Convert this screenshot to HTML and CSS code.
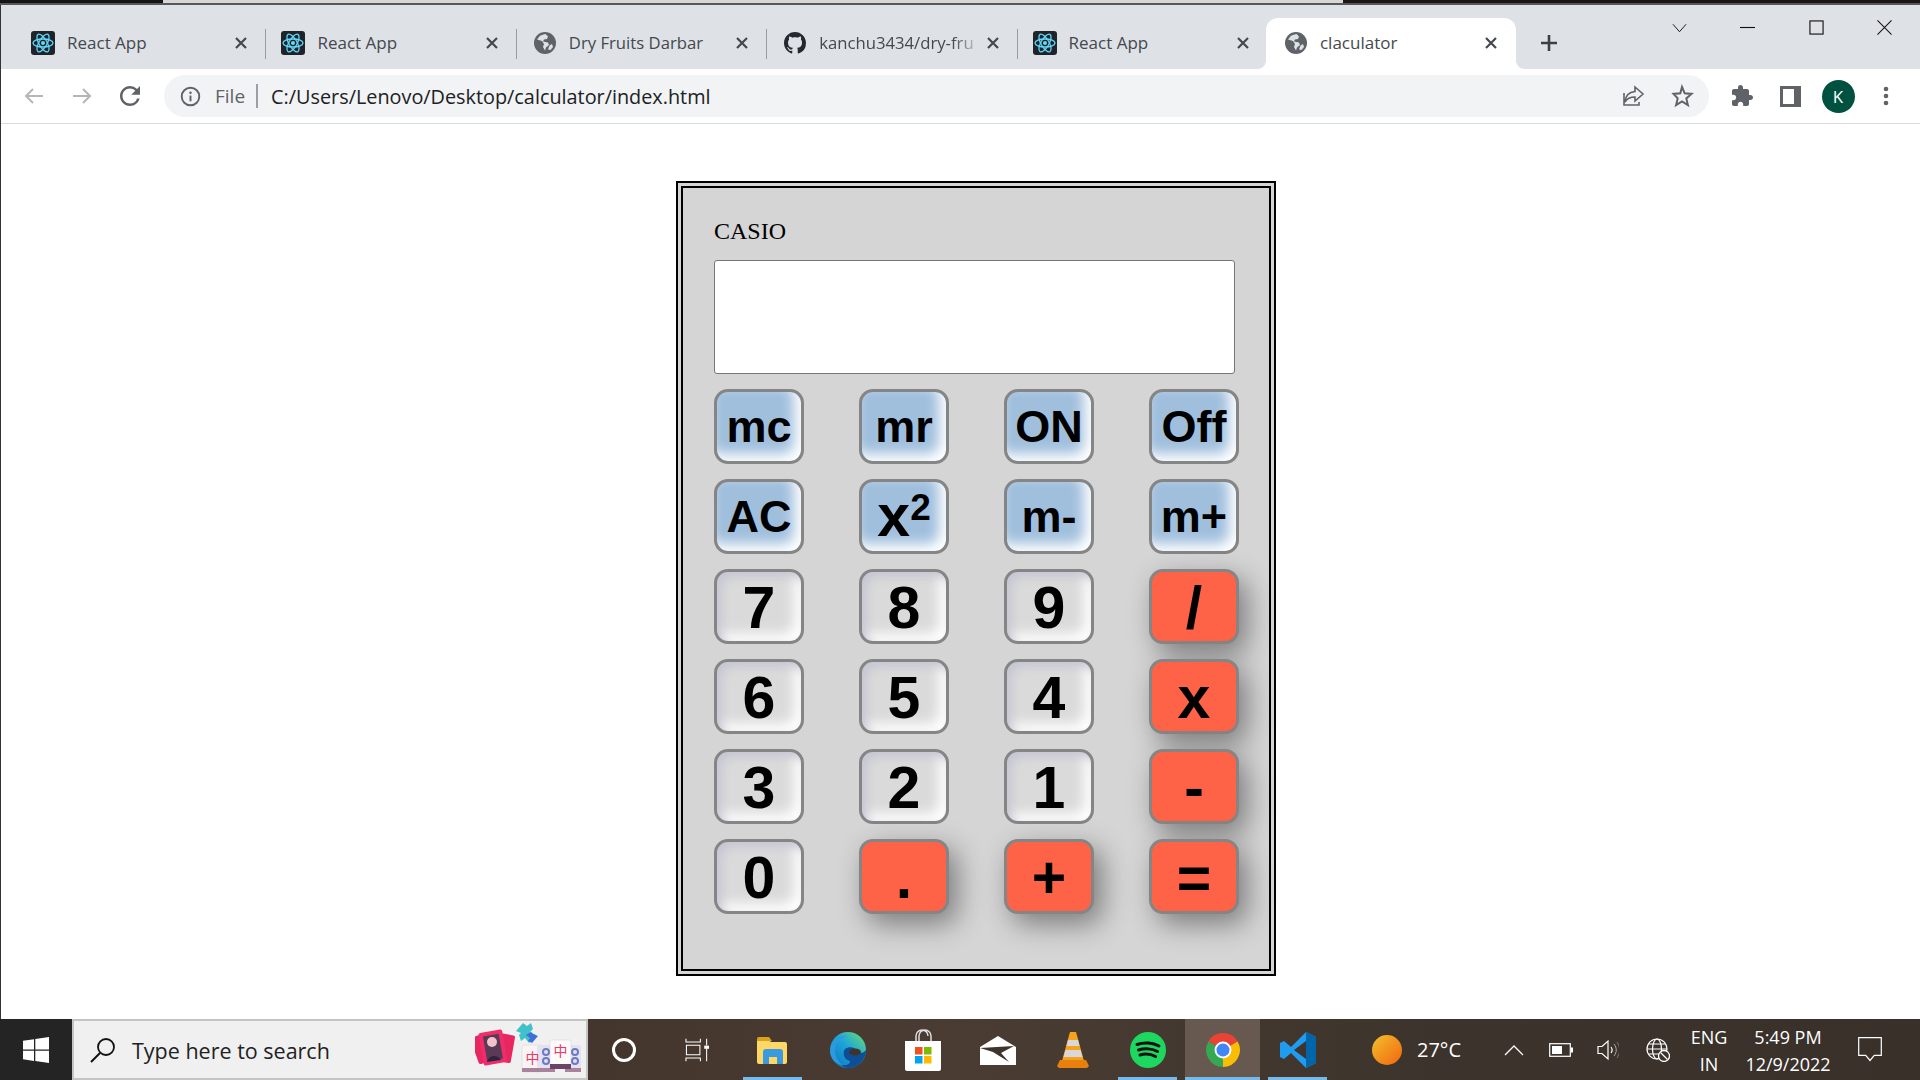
FILE: index.html
```html
<!DOCTYPE html>
<html lang="en">
<head>
<meta charset="utf-8">
<title>claculator</title>
<link rel="stylesheet" href="styles.css">
</head>
<body>
<svg class="defs" width="0" height="0" aria-hidden="true">
  <symbol id="i-react" viewBox="0 0 24 24">
    <rect width="24" height="24" rx="3" fill="#20232a"/>
    <g fill="none" stroke="#61dafb" stroke-width="1.3">
      <ellipse cx="12" cy="12" rx="10" ry="4"/>
      <ellipse cx="12" cy="12" rx="10" ry="4" transform="rotate(60 12 12)"/>
      <ellipse cx="12" cy="12" rx="10" ry="4" transform="rotate(120 12 12)"/>
    </g>
    <circle cx="12" cy="12" r="2" fill="#61dafb"/>
  </symbol>
  <symbol id="i-globe" viewBox="0 0 22 22">
    <circle cx="11" cy="11" r="11" fill="#5f6368"/>
    <path d="M9.5 2.5 6 3.8 3 7.5l5 1.6 2 3-1 3 2 3.5 1-3 3-2.5-1-2.5-5-1 1-2 3-.5 1-2.5-2.5-2.5z" fill="#dee1e6"/>
    <path d="M18 12l-2.5 1.5-1.5 4 2.5.5 2.5-3z" fill="#dee1e6"/>
  </symbol>
  <symbol id="i-x" viewBox="0 0 14 14">
    <path d="M2 2l10 10M12 2L2 12" stroke="#45484d" stroke-width="2.2" fill="none"/>
  </symbol>
</svg>

<div class="window">
  <div class="wall-strip"></div>
  <header class="tabstrip">
    <div class="tab"><svg class="fav"><use href="#i-react"/></svg><span class="title">React App</span><svg class="close"><use href="#i-x"/></svg></div>
    <div class="tab"><svg class="fav"><use href="#i-react"/></svg><span class="title">React App</span><svg class="close"><use href="#i-x"/></svg></div>
    <div class="tab"><svg class="fav small"><use href="#i-globe"/></svg><span class="title narrow">Dry Fruits Darbar</span><svg class="close"><use href="#i-x"/></svg></div>
    <div class="tab"><svg class="fav small" viewBox="0 0 16 16"><path fill="#24292f" d="M8 0C3.58 0 0 3.58 0 8c0 3.54 2.29 6.53 5.47 7.59.4.07.55-.17.55-.38 0-.19-.01-.82-.01-1.49-2.01.37-2.53-.49-2.69-.94-.09-.23-.48-.94-.82-1.13-.28-.15-.68-.52-.01-.53.63-.01 1.08.58 1.23.82.72 1.21 1.87.87 2.33.66.07-.52.28-.87.51-1.07-1.78-.2-3.64-.89-3.64-3.95 0-.87.31-1.59.82-2.15-.08-.2-.36-1.02.08-2.12 0 0 .67-.21 2.2.82.64-.18 1.32-.27 2-.27.68 0 1.36.09 2 .27 1.53-1.04 2.2-.82 2.2-.82.44 1.1.16 1.92.08 2.12.51.56.82 1.27.82 2.15 0 3.07-1.87 3.75-3.65 3.95.29.25.54.73.54 1.48 0 1.07-.01 1.93-.01 2.2 0 .21.15.46.55.38A8.013 8.013 0 0016 8c0-4.42-3.58-8-8-8z"/></svg><span class="title narrow fade">kanchu3434/dry-fru</span><svg class="close"><use href="#i-x"/></svg></div>
    <div class="tab last"><svg class="fav"><use href="#i-react"/></svg><span class="title">React App</span><svg class="close"><use href="#i-x"/></svg></div>
    <div class="tab active"><svg class="fav small"><use href="#i-globe"/></svg><span class="title">claculator</span><svg class="close"><use href="#i-x"/></svg></div>
    <svg class="newtab" viewBox="0 0 18 18"><path d="M9 1v16M1 9h16" stroke="#3c4043" stroke-width="2.6"/></svg>
    <div class="winctl">
      <svg class="ctl" viewBox="0 0 16 16"><path d="M1 4.5l7 8 7-8" fill="none" stroke="#111" stroke-width="1"/></svg>
      <svg class="ctl" viewBox="0 0 16 16"><path d="M0 8h16" stroke="#111" stroke-width="1.2"/></svg>
      <svg class="ctl" viewBox="0 0 16 16"><rect x="1" y="1" width="14" height="14" fill="none" stroke="#111" stroke-width="1.2"/></svg>
      <svg class="ctl" viewBox="0 0 16 16"><path d="M.5.5l15 15M15.500.5l-15 15" stroke="#111" stroke-width="1.1"/></svg>
    </div>
  </header>

  <nav class="toolbar">
    <div class="navbtn"><svg viewBox="0 0 24 24"><path d="M21 12H4M11 5l-7 7 7 7" fill="none" stroke="#b4b6b9" stroke-width="2"/></svg></div>
    <div class="navbtn"><svg viewBox="0 0 24 24"><path d="M3 12h17M13 5l7 7-7 7" fill="none" stroke="#b4b6b9" stroke-width="2"/></svg></div>
    <div class="navbtn"><svg class="reload" viewBox="0 0 24 24"><path fill="#5f6368" d="M17.65 6.35A7.958 7.958 0 0012 4c-4.42 0-7.99 3.58-7.99 8s3.57 8 7.99 8c3.73 0 6.84-2.55 7.73-6h-2.08A5.99 5.99 0 0112 18c-3.31 0-6-2.69-6-6s2.69-6 6-6c1.66 0 3.14.69 4.220 1.78L13 11h7V4l-2.35 2.35z"/></svg></div>
    <div class="omnibox">
      <svg class="info" viewBox="0 0 22 22"><circle cx="11" cy="11" r="9.200" fill="none" stroke="#5f6368" stroke-width="2"/><path d="M11 10v6" stroke="#5f6368" stroke-width="2"/><circle cx="11" cy="7" r="1.300" fill="#5f6368"/></svg>
      <span class="scheme">File</span>
      <span class="url">C:/Users/Lenovo/Desktop/calculator/index.html</span>
      <div class="omni-icons">
        <div class="navbtn"><svg viewBox="0 0 24 24"><path d="M14 3l8 7-8 7v-4c-5 0-8 1.500-10 5 .5-6 4-10 10-10.500z M3 9v12h15v-3" fill="none" stroke="#5f6368" stroke-width="1.600"/></svg></div>
        <div class="navbtn"><svg viewBox="0 0 24 24"><path d="M12 3l2.700 6.300 6.800.6-5.200 4.500 1.600 6.700-5.900-3.600-5.900 3.600 1.600-6.700L3.500 9.900l6.800-.6z" fill="none" stroke="#5f6368" stroke-width="2"/></svg></div>
      </div>
    </div>
    <div class="navbtn"><svg viewBox="0 0 24 24"><path fill="#5f6368" d="M20.500 11H19V7c0-1.100-.9-2-2-2h-4V3.500C13 2.120 11.880 1 10.500 1S8 2.120 8 3.500V5H4c-1.100 0-1.990.9-1.990 2v3.800H3.500c1.490 0 2.700 1.210 2.700 2.700s-1.210 2.700-2.700 2.700H2V20c0 1.100.9 2 2 2h3.800v-1.500c0-1.490 1.210-2.700 2.700-2.700 1.490 0 2.700 1.210 2.700 2.700V22H17c1.100 0 2-.9 2-2v-4h1.500c1.380 0 2.500-1.120 2.500-2.500S21.880 11 20.500 11z"/></svg></div>
    <div class="navbtn"><svg class="side" viewBox="0 0 21 21"><path fill="#5f6368" fill-rule="evenodd" d="M0 0h21v21H0zM3 3v15h11V3z"/></svg></div>
    <div class="navbtn"><span class="avatar">K</span></div>
    <div class="navbtn"><svg viewBox="0 0 24 24"><circle cx="12" cy="5" r="2.300" fill="#5f6368"/><circle cx="12" cy="12" r="2.300" fill="#5f6368"/><circle cx="12" cy="19" r="2.300" fill="#5f6368"/></svg></div>
  </nav>

  <main class="page">
    <section class="calculator">
      <div class="brand">CASIO</div>
      <div class="display"></div>
      <div class="keys">
        <button class="key mem">mc</button>
        <button class="key mem">mr</button>
        <button class="key mem">ON</button>
        <button class="key mem">Off</button>
        <button class="key mem">AC</button>
        <button class="key mem big">x<sup>2</sup></button>
        <button class="key mem">m-</button>
        <button class="key mem">m+</button>
        <button class="key num">7</button>
        <button class="key num">8</button>
        <button class="key num">9</button>
        <button class="key op">/</button>
        <button class="key num">6</button>
        <button class="key num">5</button>
        <button class="key num">4</button>
        <button class="key op">x</button>
        <button class="key num">3</button>
        <button class="key num">2</button>
        <button class="key num">1</button>
        <button class="key op">-</button>
        <button class="key num">0</button>
        <button class="key op">.</button>
        <button class="key op">+</button>
        <button class="key op">=</button>
      </div>
    </section>
  </main>
</div>

<footer class="taskbar">
  <div class="start"><svg viewBox="0 0 26 26" width="26" height="26"><path fill="#fff" d="M0 3.800l11-1.600v10.300H0zM12.300 2l13.700-2v12.500H12.300zM0 13.800h11v10.100L0 22.300zM12.300 13.800H26V26l-13.700-2z"/></svg></div>
  <div class="search">
    <svg class="lens" viewBox="0 0 26 26" width="26" height="26"><circle cx="16" cy="10" r="8" fill="none" stroke="#111" stroke-width="1.800"/><path d="M10 16L1 25" stroke="#111" stroke-width="2"/></svg>
    <span class="search-text">Type here to search</span>
    <svg class="promo" viewBox="0 0 106 54" width="106" height="54">
      <rect x="-1" y="12" width="20" height="28" rx="2" transform="rotate(-20 9 26)" fill="#e8265f"/>
      <rect x="20" y="12" width="18" height="28" rx="2" transform="rotate(10 29 26)" fill="#e8265f"/>
      <rect x="6" y="9" width="24" height="33" rx="2" transform="rotate(-10 18 26)" fill="#f02c6a"/>
      <rect x="10" y="13" width="16" height="25" transform="rotate(-10 18 26)" fill="#5a3b56"/>
      <circle cx="17" cy="20" r="5" fill="#f2c4c9"/>
      <path d="M19 34c-3 0-6 2-7 6l14-2c-1-2-4-4-7-4z" fill="#2f2440"/>
      <path d="M41 9l7-8 4 3 4-3 2 6-3 3 6 3-7 8-4-5-4 3-2-6 2-2z" fill="#3fc2c9"/>
      <path d="M51 13l4 3-2 3 4 2 6-7-5-2-2-2z" fill="#3f6fd8"/>
      <rect x="47" y="23" width="21" height="27" rx="2" fill="#f8f4f4" stroke="#dcd6dc" stroke-width=".6"/>
      <rect x="62" y="23" width="18" height="27" rx="2" fill="#e4e2ee"/>
      <rect x="90" y="23" width="16" height="27" rx="2" fill="#e4e2ee"/>
      <path d="M47 46h21v4H47zM62 46h18v4H62zM90 46h16v4H90z" fill="#a9829c"/>
      <rect x="75" y="18" width="21" height="27" rx="2" fill="#fdfafa" stroke="#dcd6dc" stroke-width=".6"/>
      <path d="M75 42h21v5H75z" fill="#6a4466"/>
      <text x="57.500" y="41" class="tile">中</text>
      <text x="85.500" y="34" class="tile">中</text>
      <g fill="none" stroke="#6d78c9" stroke-width="2"><circle cx="71" cy="30" r="3"/><circle cx="71" cy="39" r="3"/><circle cx="100" cy="30" r="3"/><circle cx="100" cy="39" r="3"/></g>
    </svg>
  </div>
  <div class="cell cortana"><span class="ring"></span></div>
  <div class="cell taskview"><svg viewBox="0 0 26 30" width="25" height="24" preserveAspectRatio="none"><path d="M1 1v4h15V1M1 29v-4h15v4M1.500 9h14v12h-14zM22.500 1v8M22.500 13v16" fill="none" stroke="#fff" stroke-width="1.100"/><rect x="20" y="9.500" width="5" height="4" fill="#fff"/></svg></div>
  <div class="apps">
    <div class="cell app on"><svg viewBox="0 0 32 28" width="32" height="28"><path d="M0 5a2 2 0 012-2h9l3 3h14a2 2 0 012 2v18a2 2 0 01-2 2H2a2 2 0 01-2-2z" fill="#ffd766"/><path d="M0 3a2 2 0 012-2h10l3 4H0z" fill="#dba11c"/><path d="M6 28V16a3 3 0 013-3h14a3 3 0 013 3v12h-6v-7h-8v7z" fill="#3a9ae0"/></svg></div>
    <div class="cell app"><svg viewBox="0 0 36 36" width="36" height="36"><defs><linearGradient id="edgeA" x1="0" y1="1" x2="1" y2="0"><stop offset="0" stop-color="#0c6fc0"/><stop offset=".55" stop-color="#1fa6d8"/><stop offset="1" stop-color="#6fe06a"/></linearGradient></defs><circle cx="18" cy="18" r="18" fill="url(#edgeA)"/><path d="M15 17c4-3 11-2 13 3 2 2 6 1 8-2 .5 8-7 18-17 18-3 0-6-1-8-3 4 1 9 0 9-4-6-1-8-8-5-12z" fill="#0d4f96"/><ellipse cx="25" cy="20" rx="6" ry="3.600" fill="#3e342c"/><path d="M0 18C1 8 9 3 18 4c-6 1-13 5-13 14 0 7 3 12 8 15C5 32 0 26 0 18z" fill="#2a9be0"/></svg></div>
    <div class="cell app"><svg viewBox="0 0 36 42" width="36" height="42"><path d="M11 12V7a6 6 0 0112 0M14 12V7a6 6 0 0112 0v5" fill="none" stroke="#ddd" stroke-width="1.500"/><path d="M0 12h36v28a2 2 0 01-2 2H2a2 2 0 01-2-2z" fill="#fff"/><rect x="10" y="18" width="7.500" height="7.500" fill="#f25022"/><rect x="19" y="18" width="7.500" height="7.500" fill="#7fba00"/><rect x="10" y="27" width="7.500" height="7.500" fill="#00a4ef"/><rect x="19" y="27" width="7.500" height="7.500" fill="#ffb900"/></svg></div>
    <div class="cell app"><svg viewBox="0 0 36 30" width="36" height="30"><path d="M0 12L18 1l18 11v18H0z" fill="#fff"/><path d="M0 13L34 11 21 18l8 9-16-10z" fill="#3e342c"/></svg></div>
    <div class="cell app"><svg viewBox="0 0 32 36" width="32" height="36"><path d="M11 7l2-7h6l2 7 6 22H5z" fill="#f6a21e"/><path d="M11 8h10l1.500 6h-13zM8.500 18h15l2 7h-19z" fill="#d8d8d8"/><path d="M3 28h26l3 6-2 2H2l-2-2z" fill="#e8800e"/></svg></div>
    <div class="cell app on"><svg viewBox="0 0 36 36" width="36" height="36"><circle cx="18" cy="18" r="18" fill="#1ed760"/><path d="M7 12.500c7-2.500 16-2 22 1.500M8.500 18c6-2 14-1.500 19 1.500M10 23c5-1.500 11-1 15.500 1.500" fill="none" stroke="#111" stroke-width="3" stroke-linecap="round"/></svg></div>
    <div class="cell app active on"><svg viewBox="0 0 32 32" width="36" height="36"><path d="M16 16L3 8.500A15 15 0 0129 8.500z" fill="#ea4335"/><path d="M16 16L29 8.500A15 15 0 0116 31z" fill="#fbbc04"/><path d="M16 16V31A15 15 0 013 8.500z" fill="#34a853"/><circle cx="16" cy="16" r="7.500" fill="#fff"/><circle cx="16" cy="16" r="5.800" fill="#4285f4"/></svg></div>
    <div class="cell app on"><svg viewBox="0 0 36 36" width="36" height="36"><path d="M26 0l10 5v26l-10 5L11 21l-7 6-4-2V11l4-2 7 6z" fill="#1f9cf0"/><path d="M26 0l10 5v26l-10 5z" fill="#0065a9"/><path d="M26 9L14 18l12 9z" fill="#3e342c"/></svg></div>
  </div>
  <div class="weather"><span class="sun"></span><span class="temp">27°C</span></div>
  <div class="cell tray chev"><svg viewBox="0 0 20 12" width="20" height="12"><path d="M1 11l9-9 9 9" fill="none" stroke="#fff" stroke-width="1.300"/></svg></div>
  <div class="cell tray batt"><svg viewBox="0 0 24 14" width="24" height="14"><rect x=".7" y=".7" width="20.600" height="12.600" fill="none" stroke="#fff" stroke-width="1.200"/><rect x="3" y="3" width="10" height="8" fill="#fff"/><rect x="22" y="4.500" width="2" height="5" fill="#fff"/></svg></div>
  <div class="cell tray spk"><svg viewBox="0 0 22 22" width="22" height="22"><path d="M1 7.500h4L11 2v18l-6-5.500H1z" fill="none" stroke="#fff" stroke-width="1.200"/><path d="M14 8c1.500 2 1.500 4 0 6" fill="none" stroke="#fff" stroke-width="1.200"/><path d="M17 5c3 4 3 8 0 12" fill="none" stroke="#aaa" stroke-width="1"/><path d="M20 3c3.500 5 3.500 11 0 16" fill="none" stroke="#777" stroke-width="1"/></svg></div>
  <div class="cell tray net"><svg viewBox="0 0 24 24" width="24" height="24"><g fill="none" stroke="#fff" stroke-width="1.200"><circle cx="11" cy="11" r="10"/><ellipse cx="11" cy="11" rx="4.500" ry="10"/><path d="M1 11h20M2.500 6h17M2.500 16h17"/></g><circle cx="18" cy="18" r="5.500" fill="#3c342c" stroke="#fff" stroke-width="1.300"/><path d="M14.500 14.500l7 7" stroke="#fff" stroke-width="1.300"/></svg></div>
  <div class="lang"><span>ENG</span><span>IN</span></div>
  <div class="clock"><span>5:49 PM</span><span>12/9/2022</span></div>
  <div class="cell tray note"><svg viewBox="0 0 24 25" width="24" height="25"><path d="M.7.700h22.600v17.600h-7L12 23.500l-4.300-5.200h-7z" fill="none" stroke="#fff" stroke-width="1.200"/></svg></div>
</footer>
</body>
</html>
```

FILE: styles.css
```css
* { box-sizing: border-box; }
html, body { margin: 0; height: 100%; }
body {
  width: 1920px;
  height: 1080px;
  overflow: hidden;
  display: flex;
  flex-direction: column;
  font-family: "Open Sans", "Noto Sans", sans-serif;
  background: #fff;
}
.defs { position: absolute; }

.window {
  flex: 1;
  min-height: 0;
  display: flex;
  flex-direction: column;
  border-left: 1px solid #333;
}
.wall-strip {
  height: 5px;
  flex: none;
  border-bottom: 2px solid #55575a;
  margin-left: -1px;
  background: linear-gradient(90deg, #151515 0 163px, #d8d6d2 163px 1343px, #1c1512 1343px);
}

/* tab strip */
.tabstrip {
  height: 64px;
  flex: none;
  display: flex;
  align-items: flex-end;
  padding-left: 15px;
  background: #dee1e6;
}
.tab {
  position: relative;
  width: 250.4px;
  height: 51px;
  flex: none;
  display: flex;
  align-items: center;
  padding: 0 18px 0 15px;
  color: #45484d;
  font-size: 17px;
}
.tab::after {
  content: "";
  position: absolute;
  right: 0;
  top: 11px;
  height: 30px;
  width: 1px;
  background: #9a9ca0;
}
.tab.last { width: 248.400px; padding-right: 16px; }
.tab.last::after, .tab.active::after { display: none; }
.tab.active {
  background: #fff;
  border-radius: 12px 12px 0 0;
}
.tab.active .fav.small { margin-left: 4px; margin-right: 13px; }
.tab.active::before {
  content: "";
  position: absolute;
  left: -8px;
  right: -8px;
  bottom: 0;
  height: 8px;
  background:
    radial-gradient(circle at 0 0, #dee1e6 7.500px, #fff 8px) left bottom / 8px 8px no-repeat,
    radial-gradient(circle at 100% 0, #dee1e6 7.500px, #fff 8px) right bottom / 8px 8px no-repeat;
}
.fav { width: 24px; height: 24px; flex: none; margin-right: 12px; margin-top: -1px; }
.fav.small { width: 22px; height: 22px; margin: -1px 13px 0 2px; }
.title { flex: 1; white-space: nowrap; margin-top: -3px; }
.title.narrow { font-size: 16.700px; }
.title.fade { -webkit-mask-image: linear-gradient(90deg, #000 82%, transparent); mask-image: linear-gradient(90deg, #000 82%, transparent); }
.close { width: 14px; height: 14px; flex: none; margin-left: 4px; margin-top: -1px; }
.newtab { width: 18px; height: 18px; flex: none; margin: 0 0 17px 24px; }
.winctl {
  margin-left: auto;
  align-self: flex-start;
  display: flex;
  padding: 15px 28px 0 0;
  gap: 53.500px;
}
.ctl { width: 15px; height: 15px; flex: none; }

/* toolbar */
.toolbar {
  height: 55px;
  flex: none;
  display: flex;
  align-items: flex-start;
  padding: 6px 10px 0 9px;
  background: #fff;
  border-bottom: 1px solid #dadce0;
}
.navbtn {
  width: 48px;
  height: 42px;
  flex: none;
  display: flex;
  align-items: center;
  justify-content: center;
}
.navbtn svg { width: 24px; height: 24px; }
.navbtn svg.reload { width: 30px; height: 30px; }
.navbtn svg.side { width: 21px; height: 21px; }
.omnibox {
  flex: 1;
  height: 42px;
  margin: 0 9px 0 10px;
  padding: 0 3px 0 16px;
  display: flex;
  align-items: center;
  border-radius: 21px;
  background: #f1f3f4;
  color: #202124;
}
.info { width: 21px; height: 21px; flex: none; }
.scheme {
  margin-left: 14px;
  padding-right: 11px;
  border-right: 2px solid #9aa0a6;
  color: #5f6368;
  font-size: 19px;
  line-height: 24px;
}
.url { margin-left: 13px; font-size: 19.830px; white-space: nowrap; }
.omni-icons { margin-left: auto; display: flex; gap: 1px; }
.avatar {
  width: 33px;
  height: 33px;
  border-radius: 50%;
  background: #00513f;
  color: #fff;
  font-size: 17px;
  display: flex;
  align-items: center;
  justify-content: center;
}

/* page */
.page {
  flex: 1;
  min-height: 0;
  padding: 57px 0 0 675px;
  background: #fff;
}
.calculator {
  width: 600px;
  height: 795px;
  padding: 28px 0 0 31px;
  border: 7px double #000;
  background: #d5d5d5;
  font-family: "Liberation Serif", serif;
}
.brand { font-size: 24px; line-height: 30px; color: #000; margin-bottom: 14px; }
.display {
  width: 521px;
  height: 114px;
  background: #fff;
  border: 1px solid #767676;
  border-radius: 3px;
  margin-bottom: 15px;
}
.keys {
  display: grid;
  grid-template-columns: repeat(4, 90px);
  grid-auto-rows: 75px;
  column-gap: 55px;
  row-gap: 15px;
}
.key {
  padding: 0;
  margin: 0;
  color: #000;
  font-family: "Liberation Sans", Arial, sans-serif;
  font-weight: 700;
  font-size: 45px;
  line-height: 1;
  border: 3px solid #858585;
  border-radius: 14px;
  cursor: pointer;
}
.mem {
  background: #a0bfdd;
  box-shadow: inset -7px -7px 13px #fff, inset 3px 3px 8px #a0bfdd;
}
.num {
  background: #dadada;
  font-size: 59px;
  padding-top: 4px;
  box-shadow: inset 5px 5px 10px #c6c6d4, inset -7px -7px 13px #fff;
}
.op {
  background: #ff6347;
  font-size: 59px;
  padding-top: 4px;
  box-shadow: 8px 10px 28px rgba(0, 0, 0, .42);
}
.big { font-size: 59px; padding-top: 0; }
.big sup { font-size: 37px; line-height: 0; vertical-align: 16px; }

/* taskbar */
.taskbar {
  height: 61px;
  flex: none;
  display: flex;
  align-items: stretch;
  color: #fff;
  background: linear-gradient(90deg, #3a2924 0, #4a3c33 50%, #3c342c 75%, #39302a 100%);
}
.start {
  width: 72px;
  flex: none;
  display: flex;
  align-items: center;
  justify-content: center;
  background: #242424;
}
.search {
  width: 516px;
  flex: none;
  display: flex;
  align-items: center;
  padding-left: 16px;
  background: #f0f0f0;
  border: 2px solid #c4c4c4;
  color: #222;
}
.search-text { margin-left: 16px; margin-top: 2px; font-size: 21.500px; }
.promo { margin-left: auto; margin-right: 5px; margin-top: -2px; }
.tile {
  fill: #f0376a;
  font-family: "Noto Sans CJK SC", sans-serif;
  font-size: 14px;
  text-anchor: middle;
}
.cell { display: flex; align-items: center; justify-content: center; flex: none; }
.cortana { width: 72px; }
.ring { width: 24px; height: 24px; border: 3px solid #fff; border-radius: 50%; }
.taskview { width: 75px; }
.apps { display: flex; flex: none; }
.app { width: 75px; position: relative; }
.app.on::after {
  content: "";
  position: absolute;
  left: 8px;
  right: 8px;
  bottom: 0;
  height: 3px;
  background: #76b9ed;
}
.app.active { background: #67594f; }
.app.active::after { left: 0; right: 0; }
.weather {
  margin-left: 37px;
  width: 118px;
  flex: none;
  display: flex;
  align-items: center;
  gap: 15px;
}
.sun {
  width: 30px;
  height: 30px;
  border-radius: 50%;
  background: linear-gradient(135deg, #f4c02c, #f0650e);
}
.temp { font-size: 20px; }
.tray { width: 48px; }
.chev { width: 48px; }
.batt { width: 46px; }
.net { width: 52px; }
.lang, .clock {
  flex: none;
  display: flex;
  flex-direction: column;
  align-items: center;
  justify-content: center;
  gap: 4px;
  padding-top: 3px;
  font-size: 18px;
  line-height: 23px;
}
.lang { width: 50px; }
.clock { width: 108px; }
.note { width: 56px; }
```
